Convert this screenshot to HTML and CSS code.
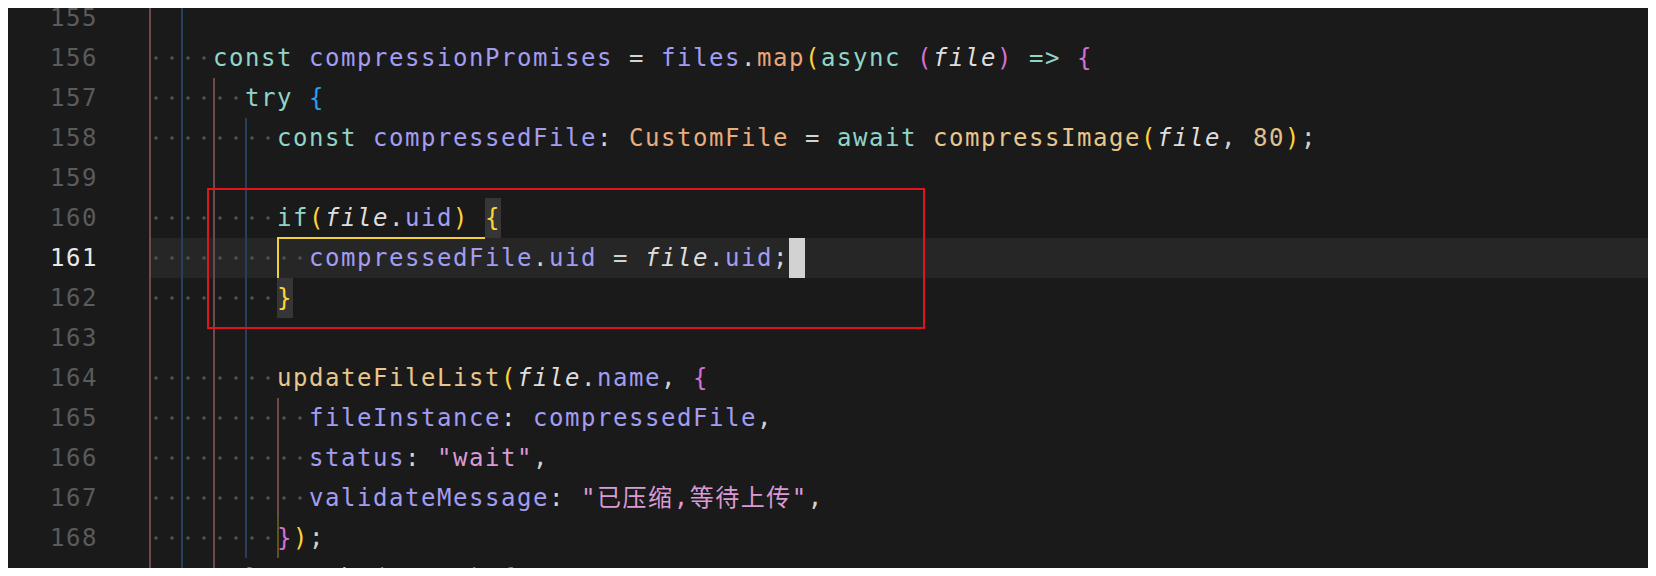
FILE: index.html
```html
<!DOCTYPE html>
<html lang="zh">
<head>
<meta charset="utf-8">
<title>Editor</title>
<link rel="stylesheet" href="styles.css">
</head>
<body>
<div class="editor">
  <div class="lines">
    <div class="line"><div class="gutter">155</div><div class="code"><span class="e gb"></span><span class="e"></span><span class="e gu"></span></div></div>
    <div class="line"><div class="gutter">156</div><div class="code"><span class="sp gb"></span><span class="sp"></span><span class="sp gu"></span><span class="sp"></span><span class="kw">const</span> <span class="v">compressionPromises</span> <span class="p">=</span> <span class="v">files</span><span class="p">.</span><span class="fn">map</span><span class="b1">(</span><span class="kw">async</span> <span class="b2">(</span><span class="it">file</span><span class="b2">)</span> <span class="kw">=&gt;</span> <span class="b2">{</span></div></div>
    <div class="line"><div class="gutter">157</div><div class="code"><span class="sp gb"></span><span class="sp"></span><span class="sp gu"></span><span class="sp"></span><span class="sp gb"></span><span class="sp"></span><span class="kw">try</span> <span class="b3">{</span></div></div>
    <div class="line"><div class="gutter">158</div><div class="code"><span class="sp gb"></span><span class="sp"></span><span class="sp gu"></span><span class="sp"></span><span class="sp gb"></span><span class="sp"></span><span class="sp gu"></span><span class="sp"></span><span class="kw">const</span> <span class="v">compressedFile</span><span class="p">:</span> <span class="ty">CustomFile</span> <span class="p">=</span> <span class="kw">await</span> <span class="fn2">compressImage</span><span class="b1">(</span><span class="it">file</span><span class="p">,</span> <span class="num">80</span><span class="b1">)</span><span class="p">;</span></div></div>
    <div class="line"><div class="gutter">159</div><div class="code"><span class="e gb"></span><span class="e"></span><span class="e gu"></span><span class="e"></span><span class="e gb"></span><span class="e"></span><span class="e gu"></span></div></div>
    <div class="line"><div class="gutter">160</div><div class="code"><span class="sp gb"></span><span class="sp"></span><span class="sp gu"></span><span class="sp"></span><span class="sp gb"></span><span class="sp"></span><span class="sp gu"></span><span class="sp"></span><span class="kw">if</span><span class="b1">(</span><span class="it">file</span><span class="p">.</span><span class="v">uid</span><span class="b1">)</span> <span class="b1 match">{</span></div></div>
    <div class="line active"><div class="gutter">161</div><div class="code"><span class="sp gb"></span><span class="sp"></span><span class="sp gu"></span><span class="sp"></span><span class="sp gb"></span><span class="sp"></span><span class="sp gu"></span><span class="sp"></span><span class="sp"></span><span class="sp"></span><span class="v">compressedFile</span><span class="p">.</span><span class="v">uid</span> <span class="p">=</span> <span class="it">file</span><span class="p">.</span><span class="v">uid</span><span class="p">;</span><span class="cursor"></span><span class="bguide"></span></div></div>
    <div class="line"><div class="gutter">162</div><div class="code"><span class="sp gb"></span><span class="sp"></span><span class="sp gu"></span><span class="sp"></span><span class="sp gb"></span><span class="sp"></span><span class="sp gu"></span><span class="sp"></span><span class="b1 match">}</span></div></div>
    <div class="line"><div class="gutter">163</div><div class="code"><span class="e gb"></span><span class="e"></span><span class="e gu"></span><span class="e"></span><span class="e gb"></span><span class="e"></span><span class="e gu"></span></div></div>
    <div class="line"><div class="gutter">164</div><div class="code"><span class="sp gb"></span><span class="sp"></span><span class="sp gu"></span><span class="sp"></span><span class="sp gb"></span><span class="sp"></span><span class="sp gu"></span><span class="sp"></span><span class="fn2">updateFileList</span><span class="b1">(</span><span class="it">file</span><span class="p">.</span><span class="v">name</span><span class="p">,</span> <span class="b2">{</span></div></div>
    <div class="line"><div class="gutter">165</div><div class="code"><span class="sp gb"></span><span class="sp"></span><span class="sp gu"></span><span class="sp"></span><span class="sp gb"></span><span class="sp"></span><span class="sp gu"></span><span class="sp"></span><span class="sp gb"></span><span class="sp"></span><span class="v">fileInstance</span><span class="p">:</span> <span class="v">compressedFile</span><span class="p">,</span></div></div>
    <div class="line"><div class="gutter">166</div><div class="code"><span class="sp gb"></span><span class="sp"></span><span class="sp gu"></span><span class="sp"></span><span class="sp gb"></span><span class="sp"></span><span class="sp gu"></span><span class="sp"></span><span class="sp gb"></span><span class="sp"></span><span class="v">status</span><span class="p">:</span> <span class="str">"wait"</span><span class="p">,</span></div></div>
    <div class="line"><div class="gutter">167</div><div class="code"><span class="sp gb"></span><span class="sp"></span><span class="sp gu"></span><span class="sp"></span><span class="sp gb"></span><span class="sp"></span><span class="sp gu"></span><span class="sp"></span><span class="sp gb"></span><span class="sp"></span><span class="v">validateMessage</span><span class="p">:</span> <span class="str">"已压缩,等待上传"</span><span class="p">,</span></div></div>
    <div class="line"><div class="gutter">168</div><div class="code"><span class="sp gb"></span><span class="sp"></span><span class="sp gu"></span><span class="sp"></span><span class="sp gb"></span><span class="sp"></span><span class="sp gu"></span><span class="sp"></span><span class="b2 go">}</span><span class="b1">)</span><span class="p">;</span></div></div>
    <div class="line"><div class="gutter">169</div><div class="code"><span class="sp gb"></span><span class="sp"></span><span class="sp gu"></span><span class="sp"></span><span class="sp gb"></span><span class="sp"></span><span class="b3">}</span> <span class="kw">catch</span> <span class="b3">(</span><span class="v">error</span><span class="b3">)</span> <span class="b3">{</span></div></div>
  </div>
  <div class="annot"></div>
</div>
</body>
</html>
```

FILE: styles.css
```css
html, body {
  background: #ffffff;
}
body {
  margin: 8px;
}
.editor {
  position: relative;
  width: 1640px;
  height: 560px;
  background: #1a1a1a;
  overflow: hidden;
  box-shadow: 0 0 7px rgba(0, 0, 0, 0.28);
  font-family: "DejaVu Sans Mono", "Noto Sans CJK SC", monospace;
  font-size: 24px;
  letter-spacing: 1.55px;
}
.lines {
  margin-top: -10px;
}
.line {
  display: flex;
  height: 40px;
  line-height: 40px;
}
.gutter {
  width: 141px;
  flex: 0 0 141px;
  box-sizing: border-box;
  padding-right: 51px;
  text-align: right;
  color: #5b5b5b;
}
.line.active .gutter {
  color: #e8e8e8;
}
.code {
  position: relative;
  flex: 1;
  white-space: pre;
  color: #d4d4d4;
}
.line.active .code {
  background: #262626;
}
.sp, .e {
  display: inline-block;
  width: 16px;
  height: 40px;
  vertical-align: top;
}
.sp {
  background: radial-gradient(circle at 7px 20px, #4d4d4d 1.4px, rgba(77, 77, 77, 0) 2.1px);
}
.gb {
  box-shadow: inset 2px 0 0 #6b4c4a;
}
.gu {
  box-shadow: inset 2px 0 0 #273f5b;
}
.go {
  display: inline-block;
  height: 40px;
  vertical-align: top;
  box-shadow: inset 2px 0 0 #5f5220;
}
.kw { color: #8fd5c8; }
.v { color: #a39df2; }
.fn { color: #e8a679; }
.ty { color: #e9ad7d; }
.fn2 { color: #e8c68c; }
.num { color: #e1c08f; }
.it { color: #dedede; font-style: italic; }
.p { color: #d4d4d4; }
.str { color: #d99ad6; }
.b1 { color: #ffd43a; }
.b2 { color: #d46fd6; }
.b3 { color: #2a9df4; }
.match {
  display: inline-block;
  height: 40px;
  vertical-align: top;
  background: #363636;
}
.cursor {
  display: inline-block;
  width: 16px;
  height: 40px;
  vertical-align: top;
  background: #d2d2d2;
}
.bguide {
  position: absolute;
  left: 128px;
  top: -1px;
  width: 208px;
  height: 41px;
  box-sizing: border-box;
  border-left: 2px solid #f2cf3d;
  border-top: 2px solid #f2cf3d;
}
.annot {
  position: absolute;
  left: 199px;
  top: 180px;
  width: 718px;
  height: 141px;
  box-sizing: border-box;
  border: 2px solid #e0141a;
}
```
